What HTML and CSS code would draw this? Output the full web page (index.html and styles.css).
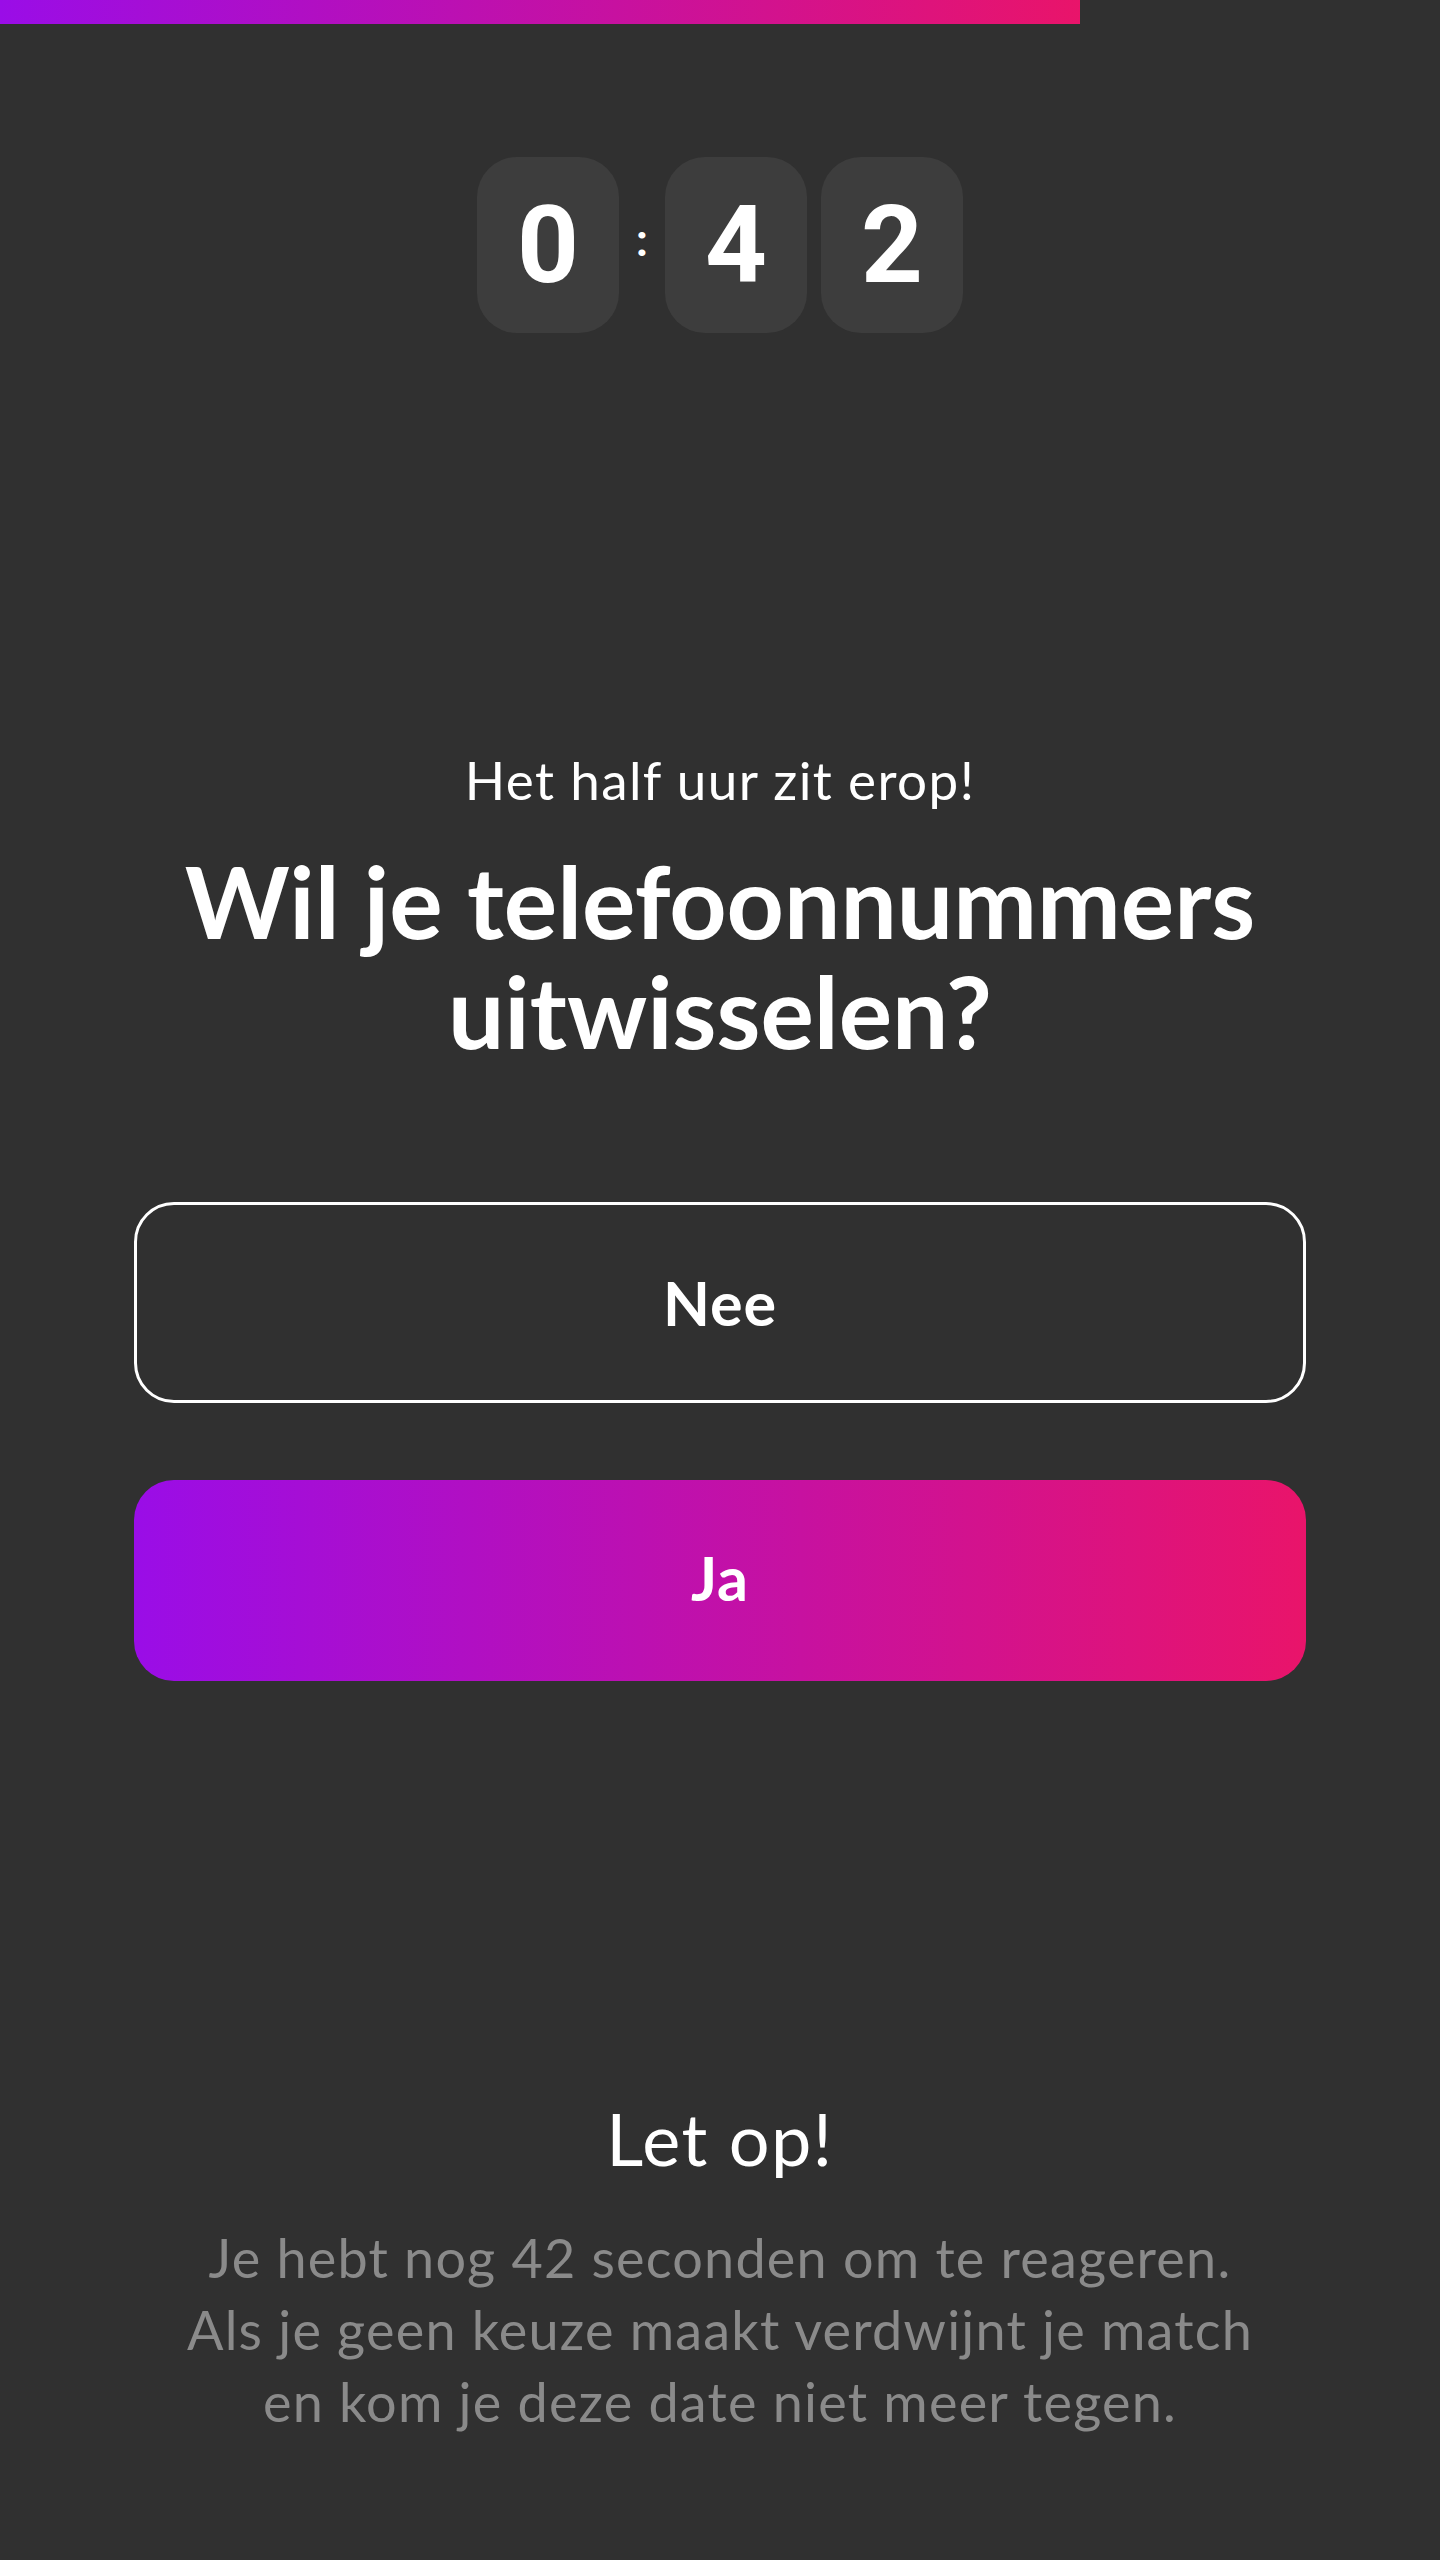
FILE: index.html
```html
<!DOCTYPE html>
<html lang="nl">
<head>
<meta charset="utf-8">
<title>Match</title>
<link rel="stylesheet" href="styles.css">
</head>
<body>
<div class="progress"></div>
<main class="screen">
  <div class="timer">
    <div class="digit">0</div>
    <div class="colon">:</div>
    <div class="digit">4</div>
    <div class="digit">2</div>
  </div>
  <section class="question">
    <p class="intro">Het half uur zit erop!</p>
    <h1 class="title">Wil je telefoonnummers uitwisselen?</h1>
  </section>
  <div class="actions">
    <button class="btn btn-outline">Nee</button>
    <button class="btn btn-primary">Ja</button>
  </div>
  <section class="notice">
    <h2 class="notice-title">Let op!</h2>
    <p class="notice-text">Je hebt nog 42 seconden om te reageren.<br>Als je geen keuze maakt verdwijnt je match<br>en kom je deze date niet meer tegen.</p>
  </section>
</main>
</body>
</html>
```

FILE: styles.css
```css
html, body {
  margin: 0;
  padding: 0;
  background: #303030;
  color: #ffffff;
  font-family: "Lato", "Noto Sans", sans-serif;
}
.progress {
  width: 75%;
  height: 24px;
  background: linear-gradient(90deg, #9a0de7 0%, #e9146a 100%);
}
.screen {
  display: flex;
  flex-direction: column;
  align-items: center;
}
.timer {
  margin-top: 133px;
  display: flex;
  align-items: center;
  gap: 14px;
}
.digit {
  width: 142px;
  height: 176px;
  border-radius: 40px;
  background: #3d3d3d;
  display: flex;
  align-items: center;
  justify-content: center;
  font-family: "Roboto", sans-serif;
  font-weight: 700;
  font-size: 108px;
  line-height: 1;
}
.colon {
  font-family: "Roboto", sans-serif;
  font-weight: 700;
  font-size: 44px;
  width: 18px;
  text-align: center;
  margin-top: -8px;
}
.question {
  margin-top: 415px;
  text-align: center;
}
.intro {
  margin: 0;
  font-size: 53px;
  line-height: 64px;
  font-weight: 400;
  letter-spacing: 1.4px;
}
.title {
  margin: 33px 0 0;
  font-size: 100px;
  line-height: 110px;
  font-weight: 700;
  width: 1200px;
}
.actions {
  margin-top: 137px;
  width: 1172px;
  display: flex;
  flex-direction: column;
  gap: 77px;
}
.btn {
  width: 100%;
  height: 201px;
  border-radius: 40px;
  font-family: "Lato", sans-serif;
  font-weight: 700;
  font-size: 61px;
  letter-spacing: 1px;
  color: #ffffff;
  cursor: pointer;
}
.btn-outline {
  background: transparent;
  border: 3px solid #ffffff;
}
.btn-primary {
  border: none;
  padding-bottom: 8px;
  background: linear-gradient(90deg, #9a0de7 0%, #e9146a 100%);
}
.notice {
  margin-top: 414px;
  text-align: center;
}
.notice-title {
  margin: 0;
  font-size: 72px;
  line-height: 86px;
  font-weight: 400;
  letter-spacing: 1.5px;
}
.notice-text {
  margin: 41px 0 0;
  font-size: 54px;
  line-height: 72px;
  letter-spacing: 1.2px;
  color: #8a8a8a;
}
```
